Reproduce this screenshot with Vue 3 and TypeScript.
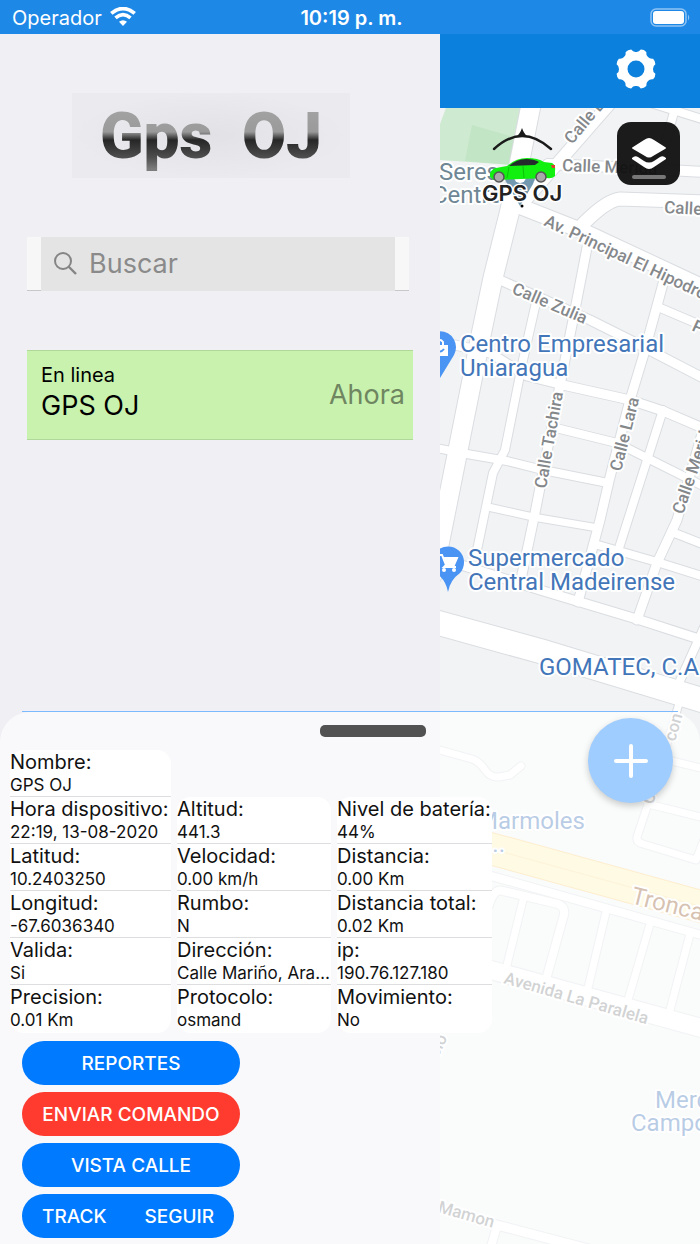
<script setup lang="ts">
import { ref } from 'vue'

interface Road { d: string; w: number }
interface Label { x: number; y: number; a: number; text: string; kind: string }
interface Field { name: string; value: string }

const search = ref('')

const roads: Road[] = [
  { d: 'M532 100 L510 210 L493 278 L481 335 L457 455 L439 545 L432 575', w: 19 },
  { d: 'M612 101 L522 204', w: 12 },
  { d: 'M548 164 L612 167 L705 172', w: 10 },
  { d: 'M638 99 L705 120', w: 8 },
  { d: 'M674 112 L657 175', w: 8 },
  { d: 'M705 202 L620 199 Q607 200 583 224', w: 13 },
  { d: 'M514 204 L585 232 L705 288', w: 15 },
  { d: 'M590 232 L573 320 L560 385 L535 513 L520 584', w: 9 },
  { d: 'M537 298 L523 360 L505 450 L493 473 L476 555', w: 8 },
  { d: 'M500 280 L590 320 L630 340 L705 379', w: 9 },
  { d: 'M664 280 L643 357 L630 400 L610 477 L600 520 L578 602', w: 9 },
  { d: 'M658 307 L705 327', w: 8 },
  { d: 'M455 345 L490 353 L527 376 L563 385 L630 400 L663 411 L705 429', w: 9 },
  { d: 'M556 428 L617 443 L647 458 L705 487', w: 8 },
  { d: 'M436 448 L467 454 L507 461 L543 470 L608 483', w: 8 },
  { d: 'M663 410 L648 457 L619 548', w: 8 },
  { d: 'M488 507 L533 517 L598 528', w: 7 },
  { d: 'M598 545 L657 562 L705 577', w: 8 },
  { d: 'M706 420 L677 520 L657 563 L637 620', w: 9 },
  { d: 'M672 532 L705 545', w: 8 },
  { d: 'M455 563 L540 590 L580 602 L640 620 L705 641', w: 9 },
  { d: 'M705 625 L675 692', w: 8 },
  { d: 'M435 622 L540 651 L705 701', w: 24 },
  { d: 'M680 700 L650 803', w: 7 },
  { d: 'M655 757 L705 769', w: 7 },
  { d: 'M705 818 L648 804 L637 837 Q636 842 643 844 L696 860 L706 835', w: 7 },
  { d: 'M432 748 L472 759 Q480 762 485 770 Q491 778 499 777 L510 775 L521 766', w: 7 },
  { d: 'M470 870 L705 936', w: 8 },
  { d: 'M489 905 Q494 888 503 891 L558 904 Q567 908 563 918 L547 976', w: 8 },
  { d: 'M524 896 L507 965', w: 7 },
  { d: 'M606 912 L588 988', w: 7 },
  { d: 'M650 924 L628 1000', w: 7 },
  { d: 'M690 934 L670 1010', w: 7 },
  { d: 'M440 956 L705 1029', w: 18 },
  { d: 'M432 1206 L493 1224 L600 1252', w: 9 },
  { d: 'M497 1226 L490 1250', w: 8 },
]

const labels: Label[] = [
  { x: 572, y: 145, a: -50, text: 'Calle B', kind: 'street' },
  { x: 562, y: 171, a: 2, text: 'Calle Merida', kind: 'street' },
  { x: 664, y: 213, a: 3, text: 'Calle', kind: 'street' },
  { x: 543, y: 225, a: 25, text: 'Av. Principal El Hipodromo', kind: 'street' },
  { x: 511, y: 293, a: 23, text: 'Calle Zulia', kind: 'street' },
  { x: 691, y: 330, a: 25, text: 'P', kind: 'street' },
  { x: 546, y: 489, a: -80, text: 'Calle Tachira', kind: 'street' },
  { x: 621, y: 472, a: -76, text: 'Calle Lara', kind: 'street' },
  { x: 683, y: 515, a: -71, text: 'Calle Merida', kind: 'street' },
  { x: 675, y: 742, a: -74, text: 'con', kind: 'street' },
  { x: 653, y: 805, a: -74, text: 'C', kind: 'street' },
  { x: 503, y: 983, a: 16, text: 'Avenida La Paralela', kind: 'street' },
  { x: 437, y: 1212, a: 16, text: 'Mamon', kind: 'street' },
  { x: 438, y: 1058, a: -65, text: 'sio', kind: 'street' },
  { x: 630, y: 903, a: 14, text: 'Tronca', kind: 'highway' },
  { x: 439, y: 180, a: 0, text: 'Seres', kind: 'poi' },
  { x: 432, y: 203, a: 0, text: 'Centro', kind: 'poi' },
  { x: 460, y: 352, a: 0, text: 'Centro Empresarial', kind: 'shop' },
  { x: 460, y: 376, a: 0, text: 'Uniaragua', kind: 'shop' },
  { x: 468, y: 566, a: 0, text: 'Supermercado', kind: 'shop' },
  { x: 468, y: 590, a: 0, text: 'Central Madeirense', kind: 'shop' },
  { x: 539, y: 675, a: 0, text: 'GOMATEC, C.A', kind: 'shop' },
  { x: 477, y: 829, a: 0, text: 'Marmoles', kind: 'shop' },
  { x: 486, y: 852, a: 0, text: '...', kind: 'shop' },
  { x: 655, y: 1108, a: 0, text: 'Merc', kind: 'shop' },
  { x: 631, y: 1131, a: 0, text: 'Campo', kind: 'shop' },
]

const columns: Field[][] = [
  [
    { name: 'Nombre:', value: 'GPS OJ' },
    { name: 'Hora dispositivo:', value: '22:19, 13-08-2020' },
    { name: 'Latitud:', value: '10.2403250' },
    { name: 'Longitud:', value: '-67.6036340' },
    { name: 'Valida:', value: 'Si' },
    { name: 'Precision:', value: '0.01 Km' },
  ],
  [
    { name: 'Altitud:', value: '441.3' },
    { name: 'Velocidad:', value: '0.00 km/h' },
    { name: 'Rumbo:', value: 'N' },
    { name: 'Dirección:', value: 'Calle Mariño, Aragua' },
    { name: 'Protocolo:', value: 'osmand' },
  ],
  [
    { name: 'Nivel de batería:', value: '44%' },
    { name: 'Distancia:', value: '0.00 Km' },
    { name: 'Distancia total:', value: '0.02 Km' },
    { name: 'ip:', value: '190.76.127.180' },
    { name: 'Movimiento:', value: 'No' },
  ],
]

// Outline of an eight-lobed gear centred on the origin.
function gearPath(): string {
  const at = (deg: number, r: number): string => {
    const t = (deg * Math.PI) / 180
    return `${(r * Math.cos(t)).toFixed(1)} ${(r * Math.sin(t)).toFixed(1)}`
  }
  let d = `M${at(14, 20)}`
  for (let k = 0; k < 8; k++) {
    const base = k * 45
    d += ` Q${at(base + 22, 21)} ${at(base + 31, 20)}`
    d += ` Q${at(base + 35, 17)} ${at(base + 45, 17)}`
    d += ` Q${at(base + 55, 17)} ${at(base + 59, 20)}`
  }
  return d + 'Z'
}
const gear = gearPath()
</script>

<template>
  <div class="app">
    <header class="status">
      <span class="carrier">
        Operador
        <svg class="wifi" viewBox="0 0 26 19" aria-hidden="true">
          <path d="M13 19 L9 14.8 Q13 11.6 17 14.8Z" />
          <path d="M5.5 10.8 Q13 4.4 20.5 10.8" fill="none" stroke="#fff" stroke-width="3.6" />
          <path d="M1.3 6.4 Q13 -3.2 24.7 6.4" fill="none" stroke="#fff" stroke-width="3.8" />
        </svg>
      </span>
      <time class="clock">10:19 p. m.</time>
      <svg class="battery" viewBox="0 0 41 19" aria-hidden="true">
        <rect x="1" y="1" width="35" height="17" rx="5" fill="none" stroke="#8ec3f3" stroke-width="1.5" />
        <rect x="3" y="3" width="31" height="13" rx="3" />
        <path d="M38 6.5 Q40.5 9.5 38 12.5Z" fill="#8ec3f3" />
      </svg>
    </header>

    <div class="body">
      <aside class="side">
        <svg class="logo" viewBox="0 0 278 85" role="img" aria-label="Gps OJ">
          <defs>
            <radialGradient id="glow">
              <stop offset="0" stop-color="#e2e1e6" />
              <stop offset="1" stop-color="#ebeaef" />
            </radialGradient>
            <linearGradient id="chrome" gradientUnits="userSpaceOnUse" x1="0" y1="18" x2="0" y2="76">
              <stop offset="0" stop-color="#a2a2a2" />
              <stop offset="0.36" stop-color="#9a9a9a" />
              <stop offset="0.5" stop-color="#262626" />
              <stop offset="0.8" stop-color="#4e4e4e" />
              <stop offset="1" stop-color="#7c7c7c" />
            </linearGradient>
          </defs>
          <rect width="278" height="85" fill="url(#glow)" />
          <text y="65" class="wordmark" fill="url(#chrome)"><tspan x="28">Gps </tspan><tspan x="170">OJ</tspan></text>
        </svg>

        <label class="search">
          <span class="field">
            <svg class="glass" viewBox="0 0 23 23" aria-hidden="true">
              <circle cx="9" cy="9" r="8" />
              <path d="M14.5 14.5 L22 22" stroke-width="2.4" />
            </svg>
            <input v-model="search" type="text" placeholder="Buscar" aria-label="Buscar" />
          </span>
        </label>

        <button type="button" class="device">
          <span class="who">
            <span class="state">En linea</span>
            <span class="title">GPS OJ</span>
          </span>
          <span class="when">Ahora</span>
        </button>
      </aside>

      <main class="main">
        <nav class="bar">
          <button type="button" class="icon" aria-label="Ajustes">
            <svg viewBox="-21 -21 42 42" aria-hidden="true">
              <path :d="gear + ' M8.5 0 A8.5 8.5 0 1 0 -8.5 0 A8.5 8.5 0 1 0 8.5 0Z'" fill-rule="evenodd" fill="#fff" />
            </svg>
          </button>
        </nav>
        <div class="map">
          <svg class="tiles" viewBox="440 108 260 1136" preserveAspectRatio="xMinYMin slice" aria-hidden="true">
            <rect x="440" y="108" width="260" height="1136" fill="#f1f3f4" />
            <path d="M446 108 H526 L514 165 L440 160 V124Z" fill="#ceead0" />
            <path d="M472 125 L520 139 L514 165 L465 161Z" fill="#c2e5c5" />
            <g fill="none" stroke-linejoin="round" stroke-linecap="round">
              <path v-for="(r, i) in roads" :key="'e' + i" :d="r.d" stroke="#dadde1" :stroke-width="r.w + 2" />
              <path v-for="(r, i) in roads" :key="'r' + i" :d="r.d" stroke="#fff" :stroke-width="r.w" />
              <path d="M430 832 L710 909" stroke="#f9cf7d" stroke-width="33" />
              <path d="M430 832 L710 909" stroke="#fef1b4" stroke-width="31" />
              <path d="M430 832 L710 909" stroke="#fbdc98" stroke-width="1" />
            </g>
            <g transform="translate(440 348)">
              <path d="M0 30 L-14 7 A16 16 0 1 1 14 7Z" fill="#4a94f3" />
              <path d="M-7 -3 H8 V8 H-7Z" fill="#fff" />
              <path d="M-3 -3 V-6 Q0 -10 3 -6 V-3" fill="none" stroke="#fff" stroke-width="2" />
              <path d="M-3 1 Q0 6 4 1" fill="none" stroke="#4a94f3" stroke-width="2" />
            </g>
            <g transform="translate(448 562)">
              <path d="M0 30 Q-2 18 -12 11 A16 16 0 1 1 12 11 Q2 18 0 30Z" fill="#4a94f3" />
              <path d="M-10 -7 H-6 L-2 3 H6 L9 -4 H-4" fill="none" stroke="#fff" stroke-width="2" />
              <path d="M-5 -5 H9 L6 2 H-2Z" fill="#fff" />
              <path d="M-2 3 L-4 5 H8" fill="none" stroke="#fff" stroke-width="2" />
              <circle cx="-4" cy="8" r="2" fill="#fff" />
              <circle cx="6" cy="8" r="2" fill="#fff" />
            </g>
            <text
              v-for="(l, i) in labels"
              :key="'t' + i"
              :class="['label', l.kind]"
              :transform="`translate(${l.x} ${l.y}) rotate(${l.a})`"
            >{{ l.text }}</text>
            <g>
              <path d="M520 206 L507 184 A15 15 0 1 1 533 184Z" fill="#7399b1" />
              <circle cx="520" cy="177" r="6" fill="#fff" />
              <path d="M494 149 Q522 123 551 149" fill="none" stroke="#1a1a1a" stroke-width="2.4" stroke-linecap="round" />
              <path d="M516 137 Q520 134 522 128 Q524 134 528 137Z" fill="#1a1a1a" />
              <path d="M490 177 Q489 170 496 168 L507 166 Q516 158 527 158 Q538 158 544 162 L552 163 Q556 165 555 171 L555 176 Q552 179 547 178 L494 180Z" fill="#12f00f" />
              <path d="M509 166 Q517 159 526 159 Q534 159 539 162 L535 165Z" fill="#252a2c" />
              <path d="M509 167 L507 178 M523 166 L524 178" fill="none" stroke="#0cc20c" />
              <path d="M551 165 H555 V168 H552Z" fill="#e0402a" />
              <circle cx="499" cy="177" r="5" fill="#a9a9a9" stroke="#555" stroke-width="1.5" />
              <circle cx="541" cy="177" r="5" fill="#a9a9a9" stroke="#555" stroke-width="1.5" />
              <circle cx="522" cy="206" r="1.5" />
              <text x="482" y="201" class="marker">GPS OJ</text>
            </g>
          </svg>
          <button type="button" class="layers" aria-label="Capas">
            <svg viewBox="0 0 36 42" aria-hidden="true">
              <path d="M18 1 Q20 1 23 3 L34 10 Q36 11 34 12 L22 19 Q18 22 14 19 L2 12 Q0 11 2 10 L13 3 Q16 1 18 1Z" />
              <path d="M1 21 Q4 18 7 20 L13 24 Q18 27 23 24 L29 20 Q32 18 35 21 L35 22 L23 30 Q18 34 13 30 L1 22Z" />
              <rect x="1" y="38" width="34" height="4" rx="2" fill="#777" />
            </svg>
          </button>
        </div>
      </main>
    </div>

    <section class="sheet">
      <div class="grip"><span></span></div>
      <button type="button" class="fab" aria-label="Agregar">
        <svg viewBox="0 0 34 34" aria-hidden="true"><path d="M17 2 V32 M2 17 H32" /></svg>
      </button>
      <div class="details">
        <dl v-for="(col, c) in columns" :key="c">
          <div v-for="f in col" :key="f.name" class="cell">
            <dt>{{ f.name }}</dt>
            <dd>{{ f.value }}</dd>
          </div>
        </dl>
      </div>
      <div class="actions">
        <button type="button" class="pill">REPORTES</button>
        <button type="button" class="pill danger">ENVIAR COMANDO</button>
        <button type="button" class="pill">VISTA CALLE</button>
        <div class="pair">
          <button type="button">TRACK</button>
          <button type="button">SEGUIR</button>
        </div>
      </div>
    </section>
  </div>
</template>

<style>
body {
  margin: 0;
}
</style>

<style scoped>
.app {
  position: relative;
  display: flex;
  flex-direction: column;
  min-height: 100vh;
  overflow: hidden;
  background: #efeff4;
  color: #111;
  font-family: Inter, "Liberation Sans", sans-serif;
}
.app *,
.app *::before {
  box-sizing: border-box;
}
button {
  margin: 0;
  padding: 0;
  border: 0;
  background: none;
  color: inherit;
  font: inherit;
  cursor: pointer;
}
.status {
  display: grid;
  grid-template-columns: 1fr auto 1fr;
  align-items: center;
  height: 34px;
  padding: 2px 9px 0 12px;
  background: #1e88e6;
  color: #fff;
  font-size: 20px;
}
.carrier {
  display: flex;
  align-items: center;
  gap: 8px;
}
.wifi {
  width: 26px;
  height: 19px;
  margin-bottom: 4px;
  fill: #fff;
}
.clock {
  font-size: 20px;
  font-weight: 600;
}
.battery {
  width: 41px;
  height: 19px;
  justify-self: end;
  margin-bottom: 2px;
  fill: #fff;
}
.body {
  flex: 1;
  display: grid;
  grid-template-columns: minmax(0, 44fr) minmax(0, 26fr);
}
.side {
  display: flex;
  flex-direction: column;
  padding: 59px 27px 0;
}
.logo {
  align-self: center;
  width: 72%;
  margin-right: 18px;
}
.wordmark {
  font-family: Roboto, "Liberation Sans", sans-serif;
  font-size: 64px;
  font-weight: 900;
}
.search {
  display: flex;
  margin: 59px 4px 0 0;
  padding: 0 14px;
  background: #f7f7f7;
  border-bottom: 1px solid #c8c7cc;
}
.field {
  flex: 1;
  min-width: 0;
  display: flex;
  align-items: center;
  gap: 12px;
  height: 54px;
  margin-bottom: -1px;
  padding: 0 13px;
  background: #e4e4e4;
}
.glass {
  flex: none;
  width: 23px;
  height: 23px;
  fill: none;
  stroke: #858585;
  stroke-width: 2;
}
.field input {
  flex: 1;
  width: 100%;
  min-width: 0;
  padding: 0;
  border: 0;
  outline: 0;
  background: transparent;
  color: #333;
  font: 27px Inter, "Liberation Sans", sans-serif;
}
.field input::placeholder {
  color: #8a8a8a;
  opacity: 1;
}
.device {
  display: flex;
  align-items: center;
  justify-content: space-between;
  height: 90px;
  margin-top: 59px;
  padding: 0 8px 0 14px;
  border: solid #b0d89a;
  border-width: 1px 0;
  background: #c9f2af;
  color: #000;
  text-align: left;
}
.who {
  display: flex;
  flex-direction: column;
  padding-bottom: 3px;
}
.state {
  font-size: 20px;
  line-height: 26px;
}
.title {
  font-size: 27px;
  line-height: 36px;
}
.when {
  font-size: 27px;
  color: #6f8661;
}
.main {
  display: flex;
  flex-direction: column;
}
.bar {
  display: flex;
  align-items: center;
  justify-content: flex-end;
  height: 74px;
  padding: 0 43px 4px;
  background: #0b80dd;
}
.icon,
.icon svg {
  display: block;
  width: 42px;
  height: 42px;
}
.map {
  position: relative;
  flex: 1;
}
.tiles {
  position: absolute;
  inset: 0;
  width: 100%;
  height: 100%;
}
.label {
  font-family: Roboto, "Liberation Sans", sans-serif;
  paint-order: stroke;
  stroke: #fff;
  stroke-width: 4px;
  stroke-linejoin: round;
}
.street {
  font-size: 17px;
  font-weight: 500;
  fill: #85888b;
}
.highway {
  font-size: 24px;
  fill: #935a30;
}
.shop {
  font-size: 24px;
  fill: #4376b9;
}
.poi {
  font-size: 24px;
  fill: #6f8795;
}
.marker {
  font-family: Inter, "Liberation Sans", sans-serif;
  font-size: 22px;
  font-weight: 600;
  fill: #222;
  paint-order: stroke;
  stroke: #fff;
  stroke-width: 3px;
}
.layers {
  position: absolute;
  top: 14px;
  right: 20px;
  display: grid;
  place-items: center;
  width: 63px;
  height: 63px;
  border-radius: 14px;
  background: rgba(15, 15, 15, 0.95);
}
.layers svg {
  width: 36px;
  height: 42px;
  margin-top: 8px;
  fill: #fff;
}
.sheet {
  position: absolute;
  left: 0;
  right: 0;
  bottom: 0;
  padding-bottom: 6px;
  border-radius: 30px 30px 0 0;
  background: rgba(255, 255, 255, 0.63);
}
.sheet::before {
  content: "";
  position: absolute;
  top: -1px;
  left: 22px;
  right: 22px;
  height: 1px;
  background: #7db9ff;
}
.grip {
  display: flex;
  justify-content: center;
  padding: 13px 0 13px 46px;
}
.grip span {
  width: 106px;
  height: 12px;
  border-radius: 5px;
  background: #525252;
}
.fab {
  position: absolute;
  top: 6px;
  right: 27px;
  display: grid;
  place-items: center;
  width: 85px;
  height: 85px;
  border-radius: 50%;
  background: #a0cdff;
  box-shadow: 0 3px 7px rgba(0, 0, 0, 0.2);
}
.fab svg {
  width: 34px;
  height: 34px;
  fill: none;
  stroke: #fff;
  stroke-width: 4;
  stroke-linecap: round;
}
.details {
  display: grid;
  grid-template-columns: 161px 154px 155px;
  gap: 6px;
  align-items: end;
  padding-left: 10px;
}
dl {
  margin: 0;
  border-radius: 14px;
  background: #fff;
}
.cell {
  height: 47px;
  border-bottom: 1px solid #dedee1;
}
.cell:last-child {
  height: 48px;
  border-bottom: 0;
}
dt {
  font-size: 20px;
  line-height: 24px;
  white-space: nowrap;
}
dd {
  margin: 0;
  overflow: hidden;
  font-size: 17px;
  line-height: 22px;
  white-space: nowrap;
  text-overflow: ellipsis;
}
.actions {
  display: flex;
  flex-direction: column;
  align-items: flex-start;
  gap: 7px;
  padding: 8px 0 0 22px;
}
.pill,
.pair {
  height: 44px;
  border-radius: 22px;
  background: #007aff;
  color: #fff;
  font-size: 19px;
  font-weight: 500;
}
.pill {
  width: 218px;
}
.danger {
  background: #ff3b30;
}
.pair {
  display: flex;
  padding: 0 1px;
}
.pair button {
  height: 44px;
  padding: 0 19px;
}
</style>
